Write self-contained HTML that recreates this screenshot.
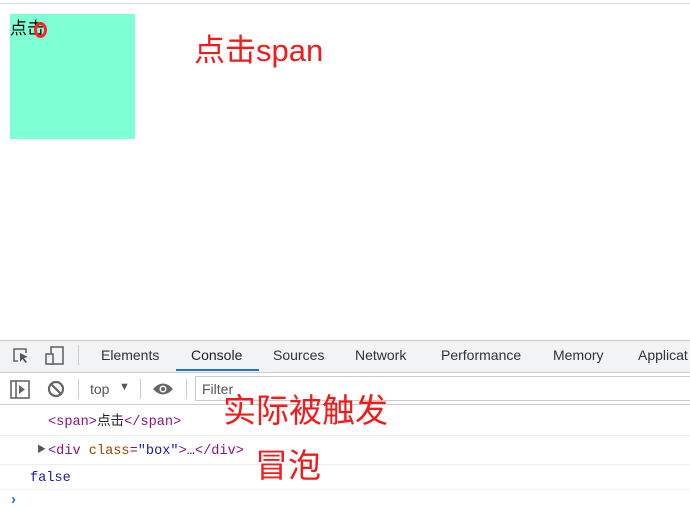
<!DOCTYPE html>
<html><head><meta charset="utf-8"><style>
*{margin:0;padding:0;box-sizing:border-box}
body{width:690px;height:509px;overflow:hidden;background:#fff;font-family:"Liberation Sans","Noto Sans CJK SC",sans-serif;position:relative}
.a{position:absolute}
.mono{font-family:"Liberation Mono","Noto Sans CJK SC",monospace;font-size:13.6px;line-height:16px}
.red{color:#f21b1b;font-family:"Liberation Sans","Noto Sans CJK SC",sans-serif}
.tab{position:absolute;top:347px;font-size:14px;color:#333}
</style></head><body>
<div class="a" style="left:0;top:3px;width:690px;height:1px;background:#ddd"></div>
<div class="a" style="left:10px;top:14px;width:125px;height:125px;background:#7fffd4"></div>
<div class="a" style="left:10px;top:16px;font-size:17px;font-family:'Noto Sans CJK SC',sans-serif;line-height:22px">点击</div>
<div class="a" style="left:34px;top:22px;width:13px;height:16px;border:3.5px solid #f22;border-radius:50%"></div>
<div class="a red" style="left:194px;top:31px;font-size:31px;line-height:40px">点击span</div>

<div class="a" style="left:0;top:340px;width:690px;height:33px;background:#f1f3f4;border-top:1px solid #ccc;border-bottom:1px solid #cbcdd1"></div>
<svg class="a" style="left:11px;top:346px" width="22" height="20" viewBox="0 0 22 20"><path d="M7 15H3V3h12v4" fill="none" stroke="#666" stroke-width="1.6"/><path d="M9 7l8 4-4 1 3 4-1.5 1-3-4-2.5 3z" fill="#555"/></svg>
<svg class="a" style="left:44px;top:345px" width="22" height="22" viewBox="0 0 22 22"><rect x="7" y="2" width="12" height="17" fill="none" stroke="#666" stroke-width="1.6"/><rect x="2" y="9" width="7" height="10" fill="#f1f3f4" stroke="#666" stroke-width="1.6"/></svg>
<div class="a" style="left:78px;top:345px;width:1px;height:20px;background:#ccc"></div>
<div class="tab" style="left:101px">Elements</div>
<div class="tab" style="left:191px;color:#202124">Console</div>
<div class="a" style="left:176px;top:369px;width:83px;height:2px;background:#1a73e8"></div>
<div class="tab" style="left:273px">Sources</div>
<div class="tab" style="left:355px">Network</div>
<div class="tab" style="left:441px">Performance</div>
<div class="tab" style="left:553px">Memory</div>
<div class="tab" style="left:638px">Applicat</div>

<div class="a" style="left:0;top:373px;width:690px;height:32px;background:#fff;border-bottom:1px solid #ccc"></div>
<svg class="a" style="left:10px;top:380px" width="20" height="19" viewBox="0 0 20 19"><rect x="1" y="1" width="18" height="17" fill="none" stroke="#666" stroke-width="1.6"/><path d="M6 1v17" stroke="#666" stroke-width="1.6"/><path d="M9 5l6 4.5-6 4.5z" fill="#666"/></svg>
<svg class="a" style="left:47px;top:380px" width="18" height="18" viewBox="0 0 18 18"><circle cx="9" cy="9" r="7" fill="none" stroke="#666" stroke-width="2.2"/><path d="M4 4l10 10" stroke="#666" stroke-width="2.2"/></svg>
<div class="a" style="left:78px;top:379px;width:1px;height:20px;background:#ccc"></div>
<div class="a" style="left:90px;top:381px;font-size:14px;color:#555">top</div>
<div class="a" style="left:119px;top:381px;font-size:11px;color:#555">▼</div>
<div class="a" style="left:140px;top:379px;width:1px;height:20px;background:#ccc"></div>
<svg class="a" style="left:152px;top:381px" width="22" height="16" viewBox="0 0 22 16"><path d="M1 8Q11 -3 21 8Q11 19 1 8z" fill="#666"/><circle cx="11" cy="8" r="3.5" fill="#fff"/><circle cx="11" cy="8" r="2" fill="#666"/></svg>
<div class="a" style="left:186px;top:379px;width:1px;height:20px;background:#ccc"></div>
<div class="a" style="left:195px;top:376px;width:500px;height:25px;border:1px solid #ccc;border-right:none"></div>
<div class="a" style="left:202px;top:381px;font-size:14px;color:#555">Filter</div>

<div class="a mono" style="left:48px;top:415px;color:#881280">&lt;span&gt;<span style="color:#222">点击</span>&lt;/span&gt;</div>
<div class="a" style="left:0;top:435px;width:690px;height:1px;background:#eee"></div>
<div class="a" style="left:37px;top:442px;font-size:9px;color:#555">▶</div>
<div class="a mono" style="left:48px;top:444px;color:#881280">&lt;div <span style="color:#994500">class</span>=<span style="color:#1a1aa6">"box"</span>&gt;<span style="color:#222">…</span>&lt;/div&gt;</div>
<div class="a" style="left:0;top:464px;width:690px;height:1px;background:#eee"></div>
<div class="a mono" style="left:30px;top:471px;color:#1a1aa6">false</div>
<div class="a" style="left:0;top:489px;width:690px;height:1px;background:#eee"></div>
<div class="a" style="left:11px;top:491px;font-size:15px;color:#1a73e8;font-weight:bold">›</div>

<div class="a red" style="left:223px;top:390px;font-size:33px;line-height:42px">实际被触发</div>
<div class="a red" style="left:255px;top:445px;font-size:33px;line-height:42px">冒泡</div>
</body></html>
